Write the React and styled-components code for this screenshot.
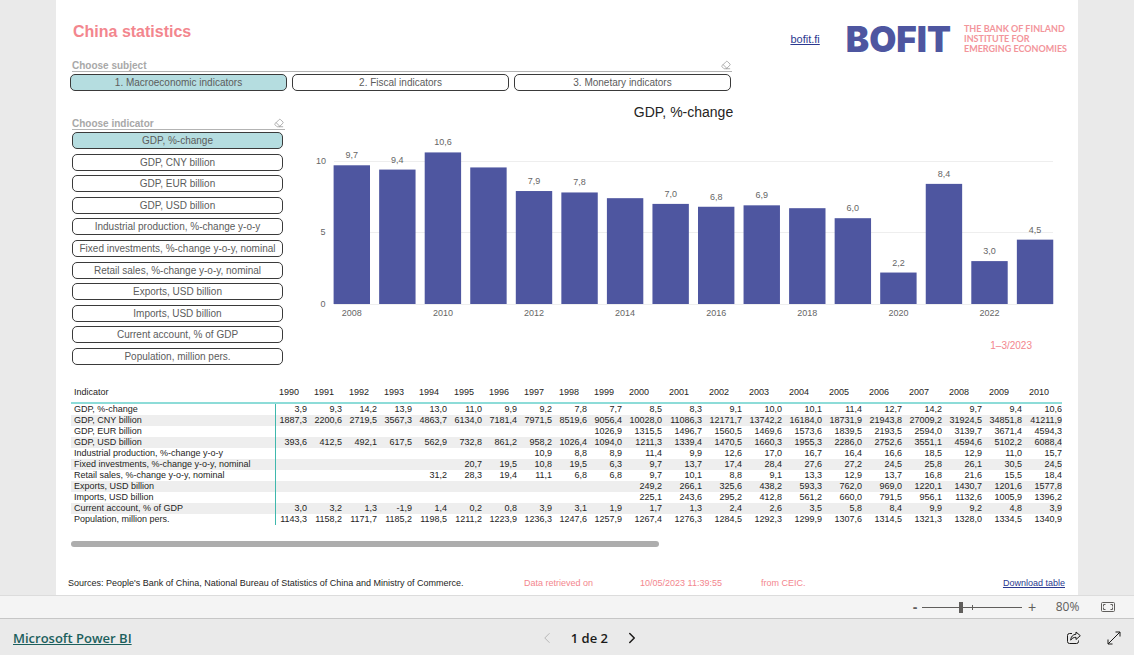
import React, { useState } from 'react';
import styled, { createGlobalStyle } from 'styled-components';
import { Eraser, ChevronLeft, ChevronRight } from 'lucide-react';

const GlobalStyle = createGlobalStyle`
  * {
    box-sizing: border-box;
  }

  body {
    margin: 0;
    background-color: #eaeaea;
    font-family: "Liberation Sans", Arial, sans-serif;
  }

  button {
    font-family: inherit;
  }
`;

const Report = styled.main`
  margin: 0 56px;
  padding: 20px 11px 4px 14px;
  background-color: #ffffff;
`;

const Top = styled.header`
  display: flex;
  justify-content: space-between;
  align-items: flex-start;
`;

const SubjectPane = styled.div`
  flex: 0 1 662px;
`;

const Title = styled.h1`
  margin: 0 0 14px;
  padding-left: 3px;
  font-size: 16px;
  line-height: 24px;
  color: #f3868e;
`;

const SlicerHead = styled.div`
  display: flex;
  align-items: flex-end;
  justify-content: space-between;
  height: 14px;
  margin: 0 0 2px 2px;
  padding-right: 1px;
  border-bottom: 1px solid #b3b3b3;
`;

const SlicerTitle = styled.h2`
  margin: 0;
  font-size: 10px;
  line-height: 11px;
  color: #a8a8a8;
`;

const ClearButton = styled.button`
  display: flex;
  padding: 0 0 1px;
  border: none;
  background: none;
  color: #a0a0a0;
  cursor: pointer;
`;

const SubjectList = styled.div`
  display: grid;
  grid-template-columns: repeat(3, 1fr);
  gap: 5px;
  margin-right: 1px;
`;

const SlicerButton = styled.button`
  height: 17px;
  padding: 0;
  border: 1px solid #3a3a3a;
  border-radius: 5px;
  background-color: ${({ $selected }) => ($selected ? '#b5dde0' : '#ffffff')};
  color: #5c5c5c;
  font-size: 10px;
  line-height: 15px;
  white-space: nowrap;
  cursor: pointer;
`;

const Brand = styled.div`
  display: flex;
  align-items: center;
  height: 38px;
`;

const SiteLink = styled.a`
  margin-right: 26px;
  font-size: 11px;
  color: #2b3990;
`;

const Wordmark = styled.div`
  margin-right: 13px;
  font-family: Inter, sans-serif;
  font-size: 35px;
  font-weight: 900;
  line-height: 36px;
  color: #4e56a0;
`;

const Tagline = styled.div`
  font-family: Lato, sans-serif;
  font-size: 9px;
  font-weight: 700;
  line-height: 10px;
  color: #f3959b;
  white-space: nowrap;
`;

const Middle = styled.section`
  display: flex;
  gap: 15px;
`;

const IndicatorPane = styled.div`
  flex: 0 0 215px;
  padding-top: 25px;
`;

const IndicatorList = styled.div`
  display: flex;
  flex-direction: column;
  justify-content: space-between;
  height: 233px;
  margin: 0 2px;
`;

const ChartPane = styled.figure`
  flex: 1;
  margin: 0;
  padding-top: 13px;
`;

const ChartTitle = styled.h2`
  margin: 0 0 10px;
  font-size: 14px;
  font-weight: 400;
  line-height: 16px;
  text-align: center;
  color: #252423;
`;

const ChartSvg = styled.svg`
  display: block;
  width: 100%;

  text {
    font-size: 9px;
    text-anchor: middle;
    fill: #666666;
  }
`;

const Period = styled.figcaption`
  margin-top: 10px;
  padding-right: 35px;
  font-size: 10px;
  line-height: 12px;
  text-align: right;
  color: #f3868e;
`;

const TableScroll = styled.div`
  margin: 17px 5px 0 1px;
  overflow: hidden;
`;

const DataTable = styled.table`
  width: 995px;
  table-layout: fixed;
  border-collapse: separate;
  border-spacing: 0;
  font-size: 9px;
  line-height: 11px;
  color: #252423;

  th,
  td {
    height: 11px;
    padding: 0 4px 0 0;
    font-weight: 400;
    text-align: right;
    white-space: nowrap;
  }

  thead th {
    height: 22px;
    padding: 0 0 0 3px;
    border-bottom: 2px solid #8ddcd8;
    text-align: left;
  }

  tbody th {
    padding: 0 0 0 3px;
    border-right: 1px solid #3fb8ad;
    text-align: left;
  }

  tbody tr:nth-child(even) {
    background-color: #eeeeee;
  }
`;

const NameCol = styled.col`
  width: 205px;
`;

const YearCol = styled.col`
  width: ${({ $wide }) => ($wide ? 40 : 35)}px;
`;

const ScrollThumb = styled.div`
  width: 59%;
  height: 6px;
  margin: 16px 0 29px 1px;
  border-radius: 3px;
  background-color: #adadad;
`;

const Sources = styled.footer`
  display: grid;
  grid-template-columns: 456px 116px 121px 1fr auto;
  align-items: center;
  margin: 0 2px 0 -2px;
  font-size: 9px;
  line-height: 15px;
  color: #252423;

  a {
    color: #2b3990;
  }
`;

const Pink = styled.span`
  color: #f3868e;
`;

const ZoomBar = styled.div`
  display: flex;
  align-items: center;
  justify-content: flex-end;
  height: 24px;
  padding-right: 19px;
  border-top: 1px solid #dcdcdc;
  border-bottom: 1px solid #c6c6c6;
  background-color: #f4f4f4;
  color: #605e5c;
`;

const PlainButton = styled.button`
  display: flex;
  align-items: center;
  justify-content: center;
  width: ${({ $width }) => $width}px;
  height: 20px;
  padding: 0;
  border: none;
  background: none;
  color: inherit;
  font-size: 14px;
  cursor: pointer;
`;

const ZoomSlider = styled.input`
  appearance: none;
  width: 100px;
  height: 12px;
  margin: 0;
  background:
    linear-gradient(#605e5c, #605e5c) 0 6px / 100px 1px no-repeat,
    linear-gradient(#605e5c, #605e5c) 50px 4px / 1px 5px no-repeat;

  &::-webkit-slider-thumb {
    appearance: none;
    width: 4px;
    height: 11px;
    background-color: #605e5c;
  }
`;

const ZoomValue = styled.span`
  width: 59px;
  padding-right: 8px;
  font-family: "Open Sans", sans-serif;
  font-size: 12px;
  line-height: 16px;
  text-align: center;
`;

const BottomBar = styled.nav`
  display: grid;
  grid-template-columns: 12fr auto 11fr;
  align-items: center;
  height: 38px;
  font-family: "Open Sans", sans-serif;
  font-size: 13px;
  font-weight: 600;
  color: #1b1a19;
`;

const PowerLink = styled.a`
  padding-left: 13px;
  color: #1c605d;
`;

const Pager = styled.div`
  display: flex;
  align-items: center;
`;

const PageLabel = styled.span`
  width: 65px;
  text-align: center;
`;

const Actions = styled.div`
  display: flex;
  justify-content: flex-end;
`;

const subjects = ['1. Macroeconomic indicators', '2. Fiscal indicators', '3. Monetary indicators'];

const firstYear = 1990;

// values of each row end in 2010, earlier years without data are left out
const indicators = [
  { name: 'GDP, %-change', values: '3,9 9,3 14,2 13,9 13,0 11,0 9,9 9,2 7,8 7,7 8,5 8,3 9,1 10,0 10,1 11,4 12,7 14,2 9,7 9,4 10,6' },
  { name: 'GDP, CNY billion', values: '1887,3 2200,6 2719,5 3567,3 4863,7 6134,0 7181,4 7971,5 8519,6 9056,4 10028,0 11086,3 12171,7 13742,2 16184,0 18731,9 21943,8 27009,2 31924,5 34851,8 41211,9' },
  { name: 'GDP, EUR billion', values: '1026,9 1315,5 1496,7 1560,5 1469,6 1573,6 1839,5 2193,5 2594,0 3139,7 3671,4 4594,3' },
  { name: 'GDP, USD billion', values: '393,6 412,5 492,1 617,5 562,9 732,8 861,2 958,2 1026,4 1094,0 1211,3 1339,4 1470,5 1660,3 1955,3 2286,0 2752,6 3551,1 4594,6 5102,2 6088,4' },
  { name: 'Industrial production, %-change y-o-y', values: '10,9 8,8 8,9 11,4 9,9 12,6 17,0 16,7 16,4 16,6 18,5 12,9 11,0 15,7' },
  { name: 'Fixed investments, %-change y-o-y, nominal', values: '20,7 19,5 10,8 19,5 6,3 9,7 13,7 17,4 28,4 27,6 27,2 24,5 25,8 26,1 30,5 24,5' },
  { name: 'Retail sales, %-change y-o-y, nominal', values: '31,2 28,3 19,4 11,1 6,8 6,8 9,7 10,1 8,8 9,1 13,3 12,9 13,7 16,8 21,6 15,5 18,4' },
  { name: 'Exports, USD billion', values: '249,2 266,1 325,6 438,2 593,3 762,0 969,0 1220,1 1430,7 1201,6 1577,8' },
  { name: 'Imports, USD billion', values: '225,1 243,6 295,2 412,8 561,2 660,0 791,5 956,1 1132,6 1005,9 1396,2' },
  { name: 'Current account, % of GDP', values: '3,0 3,2 1,3 -1,9 1,4 0,2 0,8 3,9 3,1 1,9 1,7 1,3 2,4 2,6 3,5 5,8 8,4 9,9 9,2 4,8 3,9' },
  { name: 'Population, million pers.', values: '1143,3 1158,2 1171,7 1185,2 1198,5 1211,2 1223,9 1236,3 1247,6 1257,9 1267,4 1276,3 1284,5 1292,3 1299,9 1307,6 1314,5 1321,3 1328,0 1334,5 1340,9' },
];

const years = Array.from({ length: 21 }, (_, i) => firstYear + i);

const growth = [
  { year: 2008, value: 9.7, label: '9,7' },
  { year: 2009, value: 9.4, label: '9,4' },
  { year: 2010, value: 10.6, label: '10,6' },
  { year: 2011, value: 9.55 },
  { year: 2012, value: 7.9, label: '7,9' },
  { year: 2013, value: 7.8, label: '7,8' },
  { year: 2014, value: 7.4 },
  { year: 2015, value: 7.0, label: '7,0' },
  { year: 2016, value: 6.8, label: '6,8' },
  { year: 2017, value: 6.9, label: '6,9' },
  { year: 2018, value: 6.7 },
  { year: 2019, value: 6.0, label: '6,0' },
  { year: 2020, value: 2.2, label: '2,2' },
  { year: 2021, value: 8.4, label: '8,4' },
  { year: 2022, value: 3.0, label: '3,0' },
  { year: 2023, value: 4.5, label: '4,5' },
];

const BASE = 174;
const UNIT = 14.3;
const STEP = 45.55;
const BAR = 36.4;

function GrowthChart() {
  return (
    <ChartSvg viewBox="0 0 767 200" role="img" aria-label="GDP, %-change">
      {[0, 5, 10].map(tick => (
        <g key={tick}>
          <line x1="34" x2="753" y1={Math.floor(BASE - tick * UNIT) + 0.5} y2={Math.floor(BASE - tick * UNIT) + 0.5} stroke="#eeeeee" />
          <text x={tick > 9 ? 21 : 23} y={Math.floor(BASE - tick * UNIT) + 3}>{tick}</text>
        </g>
      ))}
      {growth.map((item, i) => {
        const x = 33.6 + i * STEP;
        const top = BASE - item.value * UNIT;
        return (
          <g key={item.year}>
            <rect x={x} y={top} width={BAR} height={BASE - top} fill="#4e56a0" />
            {item.label && <text x={x + BAR / 2} y={Math.round(top) - 7}>{item.label}</text>}
            {item.year % 2 === 0 && <text x={x + BAR / 2} y="186">{item.year}</text>}
          </g>
        );
      })}
    </ChartSvg>
  );
}

function IndicatorTable() {
  return (
    <TableScroll>
      <DataTable>
        <colgroup>
          <NameCol />
          {years.map(year => <YearCol key={year} $wide={year >= 2000} />)}
        </colgroup>
        <thead>
          <tr>
            <th scope="col">Indicator</th>
            {years.map(year => <th scope="col" key={year}>{year}</th>)}
          </tr>
        </thead>
        <tbody>
          {indicators.map(({ name, values }) => {
            const cells = values.split(' ');
            const offset = years.length - cells.length;
            return (
              <tr key={name}>
                <th scope="row">{name}</th>
                {years.map((year, i) => <td key={year}>{i >= offset ? cells[i - offset] : ''}</td>)}
              </tr>
            );
          })}
        </tbody>
      </DataTable>
    </TableScroll>
  );
}

function App() {
  const [subject, setSubject] = useState(subjects[0]);
  const [indicator, setIndicator] = useState(indicators[0].name);
  const [zoom, setZoom] = useState(39);

  return (
    <>
      <GlobalStyle />
      <Report>
        <Top>
          <SubjectPane>
            <Title>China statistics</Title>
            <SlicerHead>
              <SlicerTitle>Choose subject</SlicerTitle>
              <ClearButton aria-label="Clear subject" onClick={() => setSubject('')}>
                <Eraser size={10} strokeWidth={2} />
              </ClearButton>
            </SlicerHead>
            <SubjectList>
              {subjects.map(name => (
                <SlicerButton key={name} $selected={name === subject} onClick={() => setSubject(name)}>
                  {name}
                </SlicerButton>
              ))}
            </SubjectList>
          </SubjectPane>
          <Brand>
            <SiteLink href="#bofit">bofit.fi</SiteLink>
            <Wordmark>BOFIT</Wordmark>
            <Tagline>
              THE BANK OF FINLAND<br />
              INSTITUTE FOR<br />
              EMERGING ECONOMIES
            </Tagline>
          </Brand>
        </Top>

        <Middle>
          <IndicatorPane>
            <SlicerHead>
              <SlicerTitle>Choose indicator</SlicerTitle>
              <ClearButton aria-label="Clear indicator" onClick={() => setIndicator('')}>
                <Eraser size={10} strokeWidth={2} />
              </ClearButton>
            </SlicerHead>
            <IndicatorList>
              {indicators.map(({ name }) => (
                <SlicerButton key={name} $selected={name === indicator} onClick={() => setIndicator(name)}>
                  {name}
                </SlicerButton>
              ))}
            </IndicatorList>
          </IndicatorPane>
          <ChartPane>
            <ChartTitle>GDP, %-change</ChartTitle>
            <GrowthChart />
            <Period>1–3/2023</Period>
          </ChartPane>
        </Middle>

        <IndicatorTable />
        <ScrollThumb />

        <Sources>
          <span>Sources: People's Bank of China, National Bureau of Statistics of China and Ministry of Commerce.</span>
          <Pink>Data retrieved on</Pink>
          <Pink>10/05/2023 11:39:55</Pink>
          <Pink>from CEIC.</Pink>
          <a href="#download">Download table</a>
        </Sources>
      </Report>

      <ZoomBar>
        <PlainButton $width={14} aria-label="Zoom out" onClick={() => setZoom(zoom - 5)}>
          <b>-</b>
        </PlainButton>
        <ZoomSlider type="range" aria-label="Zoom" value={zoom} onChange={e => setZoom(Number(e.target.value))} />
        <PlainButton $width={20} aria-label="Zoom in" onClick={() => setZoom(zoom + 5)}>+</PlainButton>
        <ZoomValue>80%</ZoomValue>
        <PlainButton $width={14} aria-label="Fit to page">
          <svg width="14" height="10" viewBox="0 0 14 10" fill="none" stroke="currentColor">
            <rect x="0.5" y="0.5" width="13" height="9" rx="1" />
            <path d="M4.5 2.5h-2v2M2.5 5.5v2h2M9.5 2.5h2v2M11.5 5.5v2h-2" />
          </svg>
        </PlainButton>
      </ZoomBar>

      <BottomBar>
        <div>
          <PowerLink href="#powerbi">Microsoft Power BI</PowerLink>
        </div>
        <Pager>
          <PlainButton $width={20} aria-label="Previous page" disabled>
            <ChevronLeft size={18} strokeWidth={1} color="#a6a6a6" />
          </PlainButton>
          <PageLabel>1 de 2</PageLabel>
          <PlainButton $width={20} aria-label="Next page">
            <ChevronRight size={18} strokeWidth={2} />
          </PlainButton>
        </Pager>
        <Actions>
          <PlainButton $width={40} aria-label="Share">
            <svg width="14" height="14" viewBox="0 0 14 14" fill="none" stroke="currentColor" strokeLinejoin="round">
              <path d="M5 2.5H2.5a2 2 0 0 0-2 2v6a2 2 0 0 0 2 2h7a2 2 0 0 0 2-2V9.5" />
              <path d="M9 1l4.300 3.700L9 8.500V6.300C6.500 6.300 5 7.200 3.700 9.200c.1-3.500 2.200-5.700 5.300-6z" />
            </svg>
          </PlainButton>
          <PlainButton $width={40} aria-label="Full screen">
            <svg width="14" height="14" viewBox="0 0 14 14" fill="none" stroke="currentColor">
              <path d="M8.500 1H13v4.500M1 8.500V13h4.500M13 1L1 13" />
            </svg>
          </PlainButton>
        </Actions>
      </BottomBar>
    </>
  );
}

export default App;
